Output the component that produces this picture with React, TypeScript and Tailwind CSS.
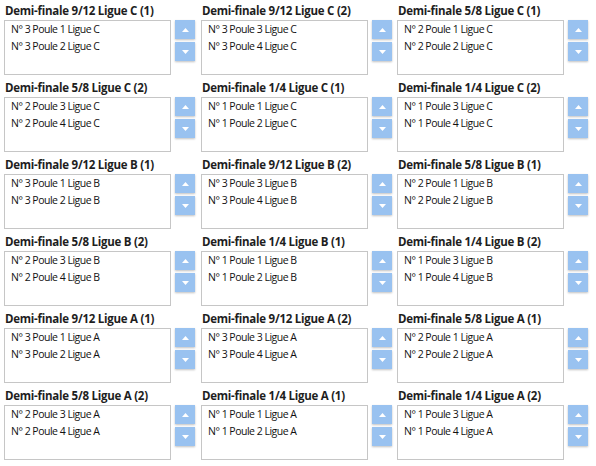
const LEAGUES = ["C", "B", "A"];

type Match = { title: string; items: [string, string] };

function buildMatches(): Match[] {
  const out: Match[] = [];
  for (const l of LEAGUES) {
    out.push(
      { title: `Demi-finale 9/12 Ligue ${l} (1)`, items: [`N° 3 Poule 1 Ligue ${l}`, `N° 3 Poule 2 Ligue ${l}`] },
      { title: `Demi-finale 9/12 Ligue ${l} (2)`, items: [`N° 3 Poule 3 Ligue ${l}`, `N° 3 Poule 4 Ligue ${l}`] },
      { title: `Demi-finale 5/8 Ligue ${l} (1)`, items: [`N° 2 Poule 1 Ligue ${l}`, `N° 2 Poule 2 Ligue ${l}`] },
      { title: `Demi-finale 5/8 Ligue ${l} (2)`, items: [`N° 2 Poule 3 Ligue ${l}`, `N° 2 Poule 4 Ligue ${l}`] },
      { title: `Demi-finale 1/4 Ligue ${l} (1)`, items: [`N° 1 Poule 1 Ligue ${l}`, `N° 1 Poule 2 Ligue ${l}`] },
      { title: `Demi-finale 1/4 Ligue ${l} (2)`, items: [`N° 1 Poule 3 Ligue ${l}`, `N° 1 Poule 4 Ligue ${l}`] },
    );
  }
  return out;
}

function ArrowButton({ dir }: { dir: "up" | "down" }) {
  return (
    <button className="flex h-[19px] w-[20px] items-center justify-center bg-[#99c2f0] shadow-[0_1px_2px_rgba(0,0,0,0.25)]">
      <svg width="7" height="4" viewBox="0 0 7 4">
        {dir === "up" ? <path d="M3.5 0 L7 4 L0 4 Z" fill="#fff" /> : <path d="M0 0 L7 0 L3.5 4 Z" fill="#fff" />}
      </svg>
    </button>
  );
}

function MatchCell({ match }: { match: Match }) {
  return (
    <div className="flex h-[77px] flex-col">
      <div className="h-[20px] pl-[1px] pt-[4px] text-[11.5px] font-bold leading-[14px] tracking-[-0.25px] text-[#1e1e1e]">
        {match.title}
      </div>
      <div className="flex gap-[4px]">
        <div className="h-[55px] w-[167px] border border-[#c6c6c6] bg-white pl-[6px]">
          {match.items.map((it) => (
            <div key={it} className="h-[17px] text-[10.5px] leading-[17px] tracking-[-0.5px] text-[#111]">
              {it}
            </div>
          ))}
        </div>
        <div className="flex flex-col gap-[3px]">
          <ArrowButton dir="up" />
          <ArrowButton dir="down" />
        </div>
      </div>
    </div>
  );
}

export default function App() {
  const matches = buildMatches();
  return (
    <div className="h-[466px] w-[596px] bg-white pl-[4px] font-['Open_Sans',sans-serif]">
      <div className="grid grid-cols-[197px_196px_196px]">
        {matches.map((m) => (
          <MatchCell key={m.title} match={m} />
        ))}
      </div>
    </div>
  );
}
